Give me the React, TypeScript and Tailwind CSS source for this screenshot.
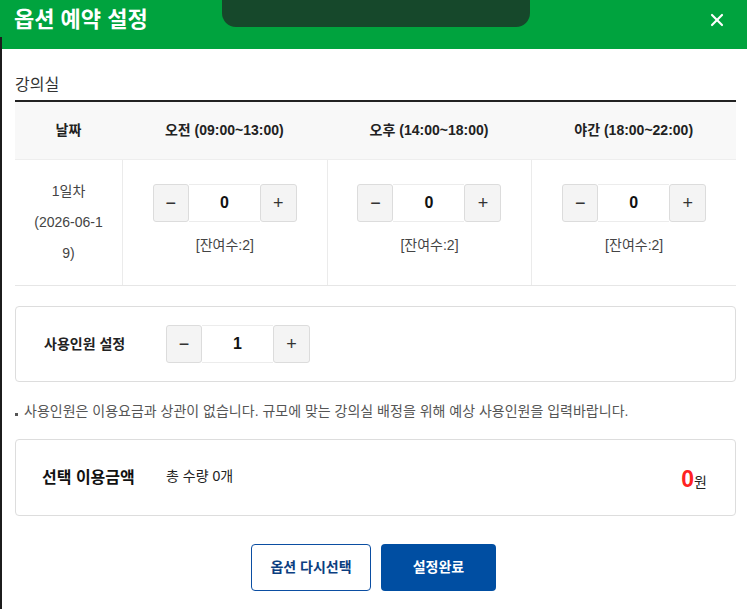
import { X } from "lucide-react";

const font = { fontFamily: '"Liberation Sans", "Noto Sans CJK KR", sans-serif' };

const Stepper = ({ value }: { value: number }) => {
  return (
    <div className="flex h-[38px] items-stretch">
      <button className="flex w-[36px] items-center justify-center rounded-[3px] border border-[#dcdcdc] bg-[#f4f4f4] text-[18px] text-[#333]">
        −
      </button>
      <div className="flex w-[71px] items-center justify-center border-y border-[#ececec] bg-white text-[16px] font-bold text-[#111]">
        {value}
      </div>
      <button className="flex w-[37px] items-center justify-center rounded-[3px] border border-[#dcdcdc] bg-[#f4f4f4] text-[18px] text-[#333]">
        +
      </button>
    </div>
  );
};

const slots = [
  "오전 (09:00~13:00)",
  "오후 (14:00~18:00)",
  "야간 (18:00~22:00)",
];

export default function App() {
  return (
    <div className="relative h-[609px] w-[747px] overflow-hidden bg-white" style={font}>
      {/* header */}
      <div className="relative flex h-[49px] items-start justify-between bg-[#00a33e] pl-[14px] pr-[20px] pt-[4px]">
        <h1 className="text-[22px] font-bold leading-[32px] text-white">옵션 예약 설정</h1>
        <div className="absolute left-[222px] top-0 h-[27px] w-[308px] rounded-b-[14px] bg-[#16482b]" />
        <X className="mt-[6px] text-white" size={20} strokeWidth={2.6} />
      </div>
      <div className="absolute bottom-0 left-0 top-[37px] w-[2px] bg-[#1c1c1c]" />

      <div className="pl-[15px] pr-[11px] pt-[24px]">
        <div className="border-b-2 border-[#222] pb-[3px] text-[16px] leading-[24px] text-[#333]">
          강의실
        </div>

        {/* table */}
        <div className="grid grid-cols-[107px_1fr_1fr_1fr] border-b border-[#e6e6e6] text-[14px]">
          <div className="flex h-[58px] items-center justify-center border-b border-[#eeeeee] bg-[#f8f8f8] font-bold text-[#222]">
            날짜
          </div>
          {slots.map((s) => (
            <div
              key={s}
              className="flex h-[58px] items-center justify-center border-b border-[#eeeeee] bg-[#f8f8f8] font-bold text-[#222]"
            >
              {s}
            </div>
          ))}
          <div className="flex h-[125px] items-center justify-center text-center leading-[31px] text-[#444]">
            <div className="w-[80px] break-all">
              1일차
              <br />
              (2026-06-19)
            </div>
          </div>
          {slots.map((s) => (
            <div
              key={s}
              className="flex h-[125px] flex-col items-center border-l border-[#ebebeb] pt-[24px]"
            >
              <Stepper value={0} />
              <div className="mt-[13px] leading-[20px] text-[#444]">[잔여수:2]</div>
            </div>
          ))}
        </div>

        {/* people */}
        <div className="mt-[20px] flex h-[76px] items-center rounded-[4px] border border-[#dddddd] pl-[28px]">
          <div className="w-[122px] text-[14px] font-bold text-[#222]">사용인원 설정</div>
          <Stepper value={1} />
        </div>

        <div className="mt-[19px] flex items-center text-[14px] leading-[20px] text-[#555]">
          <span className="mr-[6px] mt-[6px] h-[3px] w-[3px] bg-[#555]" />
          사용인원은 이용요금과 상관이 없습니다. 규모에 맞는 강의실 배정을 위해 예상 사용인원을 입력바랍니다.
        </div>

        {/* amount */}
        <div className="mt-[18px] flex h-[77px] items-center rounded-[4px] border border-[#dddddd] pl-[26px] pr-[28px]">
          <div className="w-[124px] text-[16px] font-bold text-[#111]">선택 이용금액</div>
          <div className="mb-[2px] text-[14px] text-[#222]">총 수량 0개</div>
          <div className="ml-auto flex items-baseline pt-[4px]">
            <span className="text-[23px] font-bold text-[#ff2222]">0</span>
            <span className="text-[14px] text-[#222]">원</span>
          </div>
        </div>

        <div className="mt-[28px] flex justify-center gap-[10px] pr-[4px]">
          <button className="h-[47px] w-[120px] rounded-[4px] border border-[#0b4ea2] bg-white text-[14px] font-bold text-[#0b3e80]">
            옵션 다시선택
          </button>
          <button className="h-[47px] w-[115px] rounded-[4px] bg-[#004ea2] text-[14px] font-bold text-white">
            설정완료
          </button>
        </div>
      </div>
    </div>
  );
}
